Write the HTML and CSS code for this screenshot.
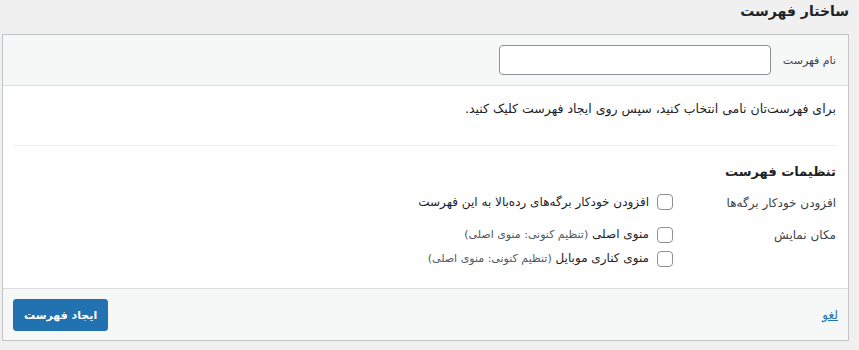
FILE: index.html
```html
<!DOCTYPE html>
<html lang="fa" dir="rtl">
<head>
<meta charset="utf-8">
<link rel="stylesheet" href="styles.css">
</head>
<body>
<div class="page">
  <h2 class="title">ساختار فهرست</h2>
  <div class="box">
    <div class="box-header">
      <label class="name-label" for="menu-name">نام فهرست</label>
      <input class="name-input" id="menu-name" type="text">
    </div>
    <div class="box-body">
      <p class="intro">برای فهرست‌تان نامی انتخاب کنید، سپس روی ایجاد فهرست کلیک کنید.</p>
      <div class="settings">
        <h3 class="settings-title">تنظیمات فهرست</h3>
        <div class="setting-row">
          <div class="setting-label">افزودن خودکار برگه‌ها</div>
          <div class="setting-options">
            <label class="option"><span class="checkbox"></span><span>افزودن خودکار برگه‌های رده‌بالا به این فهرست</span></label>
          </div>
        </div>
        <div class="setting-row">
          <div class="setting-label">مکان نمایش</div>
          <div class="setting-options">
            <label class="option"><span class="checkbox"></span><span>منوی اصلی <span class="note">(تنظیم کنونی: منوی اصلی)</span></span></label>
            <label class="option"><span class="checkbox"></span><span>منوی کناری موبایل <span class="note">(تنظیم کنونی: منوی اصلی)</span></span></label>
          </div>
        </div>
      </div>
    </div>
    <div class="box-footer">
      <a class="cancel" href="#">لغو</a>
      <button class="create" type="button">ایجاد فهرست</button>
    </div>
  </div>
</div>
</body>
</html>
```
FILE: styles.css
```css
html, body {
  margin: 0;
  padding: 0;
}
body {
  background: #f0f0f1;
  color: #3c434a;
  font-family: "DejaVu Sans", Tahoma, sans-serif;
  font-size: 12px;
  direction: rtl;
}
.page {
  padding: 0 10px 0 2px;
}
.title {
  margin: 0;
  height: 34px;
  font-size: 14px;
  font-weight: 700;
  color: #1d2327;
  line-height: 22px;
}
.box {
  border: 1px solid #c3c4c7;
  background: #fff;
}
.box-header {
  display: flex;
  align-items: center;
  gap: 12px;
  padding: 10px 12px;
  background: #f6f7f7;
  border-bottom: 1px solid #dcdcde;
}
.name-label {
  font-size: 11px;
  color: #3c434a;
}
.name-input {
  width: 272px;
  height: 30px;
  box-sizing: border-box;
  border: 1px solid #8c8f94;
  border-radius: 4px;
  background: #fff;
  margin: 0;
}
.box-body {
  padding: 0 10px;
}
.intro {
  margin: 0;
  padding: 15px 2px 0;
  height: 44px;
  border-bottom: 1px solid #f0f0f1;
  font-size: 12.5px;
  color: #1d2327;
}
.settings {
  padding: 14px 2px 8px;
}
.settings-title {
  margin: 0 0 8px;
  font-size: 13px;
  font-weight: 700;
  color: #1d2327;
  line-height: 24px;
}
.setting-row {
  display: flex;
  align-items: flex-start;
  margin-bottom: 11px;
}
.setting-label {
  width: 163px;
  flex: none;
  line-height: 20px;
  padding-top: 1px;
}
.setting-options {
  display: flex;
  flex-direction: column;
  gap: 3px;
}
.option {
  display: flex;
  align-items: center;
  gap: 8px;
  line-height: 20px;
  color: #1d2327;
}
.checkbox {
  width: 16px;
  height: 16px;
  box-sizing: border-box;
  border: 1px solid #8c8f94;
  border-radius: 4px;
  background: #fff;
  flex: none;
}
.note {
  font-size: 11px;
  color: #50575e;
}
.box-footer {
  display: flex;
  align-items: center;
  justify-content: space-between;
  padding: 10px 10px 9px;
  background: #f6f7f7;
  border-top: 1px solid #dcdcde;
}
.cancel {
  color: #2271b1;
  text-decoration: underline;
}
.create {
  height: 32px;
  padding: 0 10px;
  border: 1px solid #2271b1;
  border-radius: 3px;
  background: #2271b1;
  color: #fff;
  font-family: inherit;
  font-size: 11px;
  font-weight: 700;
}
```
